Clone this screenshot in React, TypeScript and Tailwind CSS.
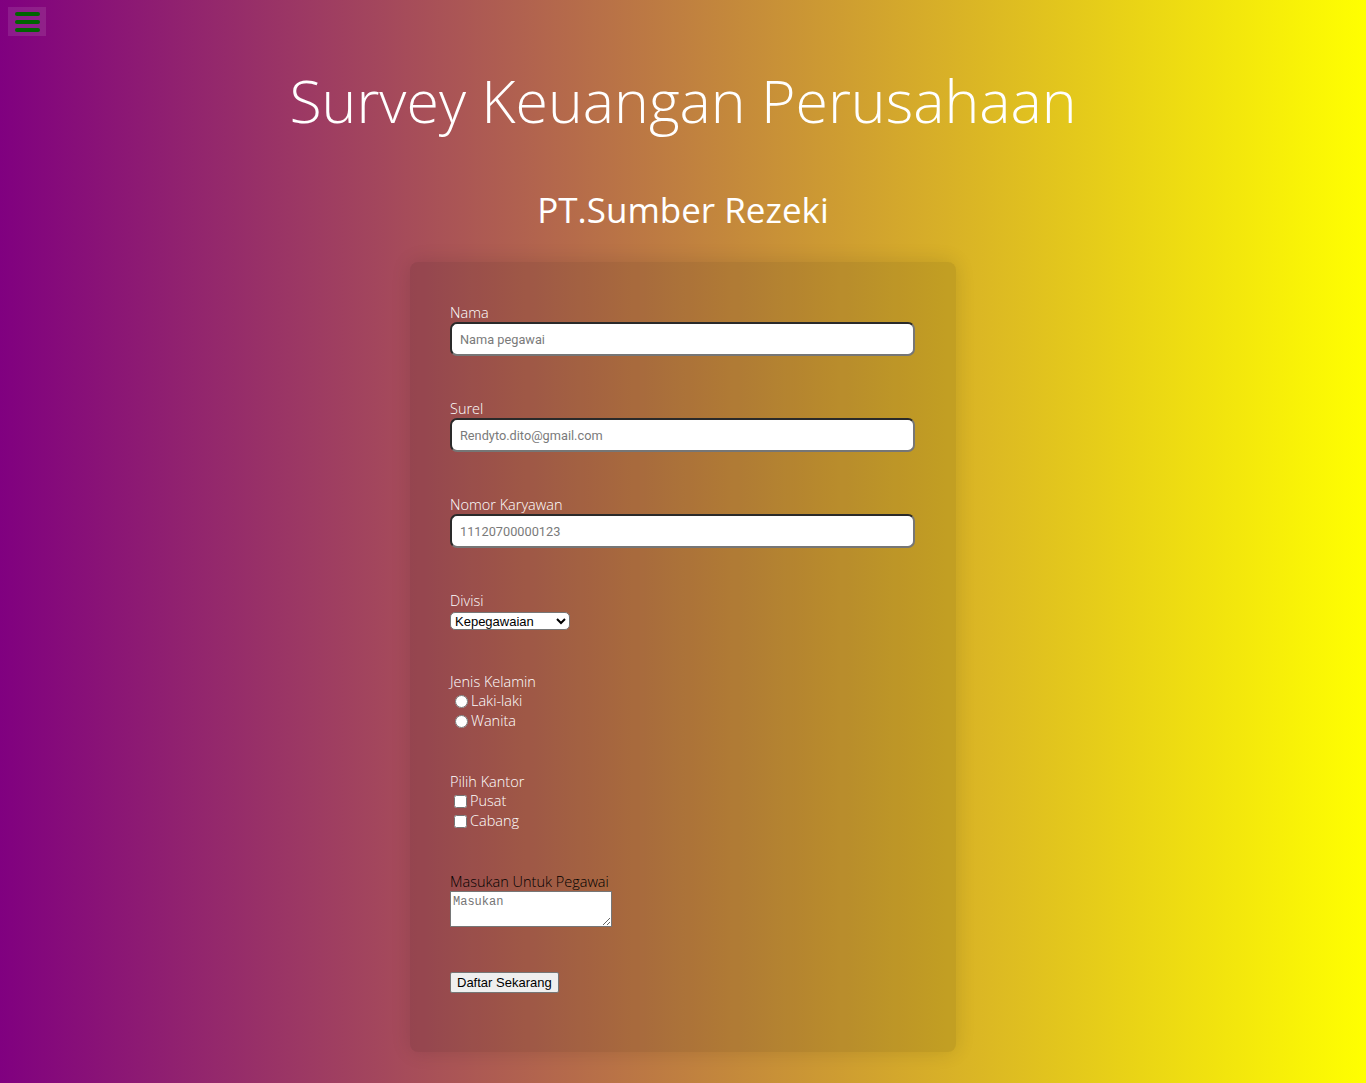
import { useState } from "react";

const textFields = [
  { label: "Nama", placeholder: "Nama pegawai", type: "text" },
  { label: "Surel", placeholder: "Rendyto.dito@gmail.com", type: "email" },
  { label: "Nomor Karyawan", placeholder: "11120700000123", type: "text" },
];

function Label({ children, dark }: { children: React.ReactNode; dark?: boolean }) {
  return (
    <label
      className={`block h-[18px] text-[14.5px] leading-[18px] font-light ${dark ? "text-black" : "text-white"}`}
    >
      {children}
    </label>
  );
}

export default function App() {
  const [divisi, setDivisi] = useState("Kepegawaian");

  return (
    <div
      className="relative min-h-[1083px] w-full bg-[linear-gradient(to_right,#800080,#ffff00)] font-['Open_Sans',sans-serif]"
    >
      <button className="absolute left-[8px] top-[7px] flex h-[29px] w-[38px] flex-col items-center justify-center gap-[4px] bg-[rgba(255,255,255,0.1)]">
        <span className="block h-[4px] w-[25px] rounded-full bg-[#006400]" />
        <span className="block h-[4px] w-[25px] rounded-full bg-[#006400]" />
        <span className="block h-[4px] w-[25px] rounded-full bg-[#006400]" />
      </button>

      <h1 className="pt-[62px] text-center text-[59px] leading-[76px] font-light text-white">
        Survey Keuangan Perusahaan
      </h1>
      <h2 className="mt-[52px] text-center text-[35px] leading-[40px] text-white">
        PT.Sumber Rezeki
      </h2>

      <form
        className="mx-auto mt-[32px] w-[546px] rounded-[8px] bg-[rgba(0,0,0,0.1)] px-[40px] pt-[42px] pb-[59px] shadow-[0_0_20px_rgba(0,0,0,0.12)]"
        onSubmit={(e) => e.preventDefault()}
      >
        {textFields.map((f, i) => (
          <div key={f.label} className={i > 0 ? "mt-[44px]" : ""}>
            <Label>{f.label}</Label>
            <input
              type={f.type}
              placeholder={f.placeholder}
              className="block h-[34px] w-[465px] rounded-[7px] border-2 border-[#2a2a2a] border-r-[#767676] border-b-[#767676] bg-white px-[8px] font-['Roboto',sans-serif] text-[12.75px] text-black placeholder:text-[#7a7a7a] outline-none"
            />
          </div>
        ))}

        <div className="mt-[44px]">
          <Label>Divisi</Label>
          <select
            value={divisi}
            onChange={(e) => setDivisi(e.target.value)}
            className="mt-[2px] block h-[18px] w-[120px] rounded-[5px] border border-[#767676] bg-white pl-0 font-['Liberation_Sans',sans-serif] text-[13px] leading-[16px] text-black"
          >
            <option>Kepegawaian</option>
            <option>Keuangan</option>
            <option>Pemasaran</option>
          </select>
        </div>

        <div className="mt-[43px]">
          <Label>Jenis Kelamin</Label>
          {["Laki-laki", "Wanita"].map((g) => (
            <label key={g} className="flex h-[20px] items-center text-[14.5px] font-light text-white">
              <input type="radio" name="jk" className="mr-[3px] ml-[5px] h-[13px] w-[13px]" />
              {g}
            </label>
          ))}
        </div>

        <div className="mt-[42px]">
          <Label>Pilih Kantor</Label>
          {["Pusat", "Cabang"].map((k) => (
            <label key={k} className="flex h-[20px] items-center text-[14.5px] font-light text-white">
              <input type="checkbox" className="mr-[3px] ml-[4px] h-[13px] w-[13px]" />
              {k}
            </label>
          ))}
        </div>

        <div className="mt-[42px]">
          <Label dark>Masukan Untuk Pegawai</Label>
          <textarea
            placeholder="Masukan"
            className="block h-[36px] w-[162px] border border-[#767676] bg-white px-[2px] pt-[3px] font-['Liberation_Mono',monospace] text-[12px] leading-[15px] placeholder:text-[#757575]"
          />
        </div>

        <button
          type="submit"
          className="mt-[45px] block h-[21px] rounded-[2px] border border-[#767676] bg-[#efefef] px-[6px] font-['Liberation_Sans',sans-serif] text-[13px] leading-[17px] text-black"
        >
          Daftar Sekarang
        </button>
      </form>
    </div>
  );
}
